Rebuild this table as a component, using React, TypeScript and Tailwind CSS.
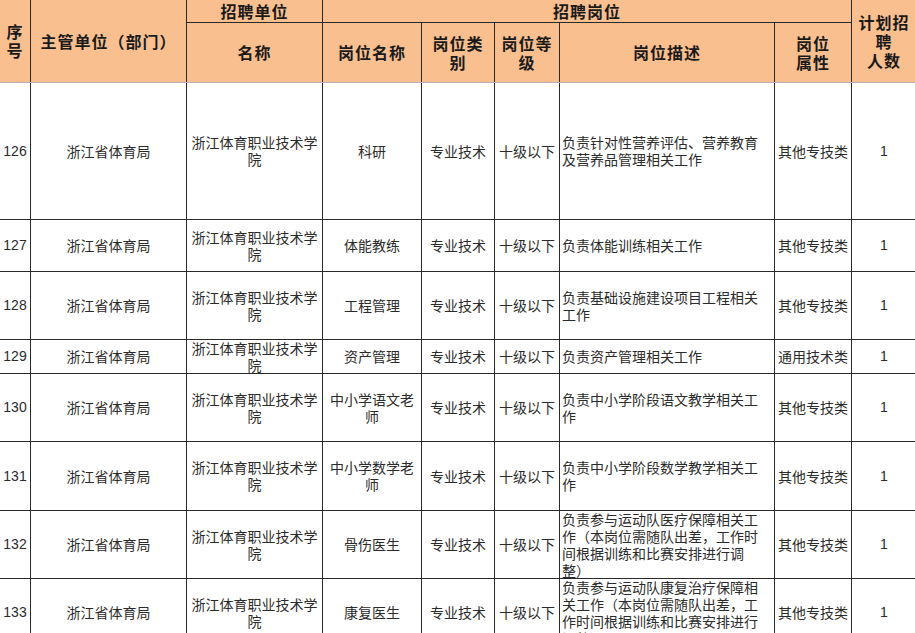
import React from "react";

type Row = {
  no: string;
  h: string;
  post: string;
  desc: string[];
  attr: string;
};

const rows: Row[] = [
  { no: "126", h: "h-[136px]", post: "科研", desc: ["负责针对性营养评估、营养教育", "及营养品管理相关工作"], attr: "其他专技类" },
  { no: "127", h: "h-[51px]", post: "体能教练", desc: ["负责体能训练相关工作"], attr: "其他专技类" },
  { no: "128", h: "h-[67px]", post: "工程管理", desc: ["负责基础设施建设项目工程相关", "工作"], attr: "其他专技类" },
  { no: "129", h: "h-[33px]", post: "资产管理", desc: ["负责资产管理相关工作"], attr: "通用技术类" },
  { no: "130", h: "h-[67px]", post: "中小学语文老师", desc: ["负责中小学阶段语文教学相关工", "作"], attr: "其他专技类" },
  { no: "131", h: "h-[68px]", post: "中小学数学老师", desc: ["负责中小学阶段数学教学相关工", "作"], attr: "其他专技类" },
  {
    no: "132",
    h: "h-[67px]",
    post: "骨伤医生",
    desc: ["负责参与运动队医疗保障相关工", "作（本岗位需随队出差，工作时", "间根据训练和比赛安排进行调", "整）"],
    attr: "其他专技类",
  },
  {
    no: "133",
    h: "h-[67px]",
    post: "康复医生",
    desc: ["负责参与运动队康复治疗保障相", "关工作（本岗位需随队出差，工", "作时间根据训练和比赛安排进行", "调整）"],
    attr: "其他专技类",
  },
];

const cols = "grid grid-cols-[30px_155px_135px_98px_72px_64px_214px_76px_64px] gap-px bg-[#2a2a2a]";
const hc =
  "bg-[#FABF8F] flex items-center justify-center text-center font-bold text-[16px] leading-[19px] tracking-[1px] text-[#1a1a1a] overflow-hidden";
const bc =
  "bg-white flex items-center justify-center text-center text-[14px] leading-[17px] text-[#2b2b2b] overflow-hidden px-1";

export default function App() {
  return (
    <div
      className="w-[915px] h-[633px] overflow-hidden bg-white"
      style={{ fontFamily: '"Noto Sans CJK SC", "Noto Sans", sans-serif' }}
    >
      <div className={`${cols} grid-rows-[22px_59px] w-[916px]`}>
        <div className={`${hc} col-start-1 row-start-1 row-span-2`}>
          序<br />号
        </div>
        <div className={`${hc} col-start-2 row-start-1 row-span-2`}>主管单位（部门）</div>
        <div className={`${hc} col-start-3 row-start-1`}>招聘单位</div>
        <div className={`${hc} col-start-4 col-span-5 row-start-1`}>招聘岗位</div>
        <div className={`${hc} col-start-9 row-start-1 row-span-2`}>
          计划招
          <br />聘
          <br />人数
        </div>
        <div className={`${hc} col-start-3 row-start-2`}>名称</div>
        <div className={`${hc} col-start-4 row-start-2`}>岗位名称</div>
        <div className={`${hc} col-start-5 row-start-2`}>
          岗位类
          <br />别
        </div>
        <div className={`${hc} col-start-6 row-start-2`}>
          岗位等
          <br />级
        </div>
        <div className={`${hc} col-start-7 row-start-2`}>岗位描述</div>
        <div className={`${hc} col-start-8 row-start-2`}>
          岗位
          <br />属性
        </div>
      </div>
      <div className="h-px w-[916px] bg-[#bdaeb6]" />
      <div className={`${cols} w-[916px]`}>
        {rows.map((r) => (
          <React.Fragment key={r.no}>
            <div className={`${bc} ${r.h} !px-0 font-['Liberation_Sans'] text-[13px]`}>{r.no}</div>
            <div className={`${bc} ${r.h}`}>浙江省体育局</div>
            <div className={`${bc} ${r.h}`}>浙江体育职业技术学院</div>
            <div className={`${bc} ${r.h}`}>{r.post}</div>
            <div className={`${bc} ${r.h} !px-0`}>专业技术</div>
            <div className={`${bc} ${r.h} !px-0`}>十级以下</div>
            <div className={`${bc} ${r.h} !justify-start text-left !pl-[2px]`}>
              <div className="flex flex-col whitespace-nowrap">
                {r.desc.map((l, i) => (
                  <span key={i}>{l}</span>
                ))}
              </div>
            </div>
            <div className={`${bc} ${r.h} !px-0`}>{r.attr}</div>
            <div className={`${bc} ${r.h} font-['Liberation_Sans'] text-[13px]`}>1</div>
          </React.Fragment>
        ))}
      </div>
    </div>
  );
}
